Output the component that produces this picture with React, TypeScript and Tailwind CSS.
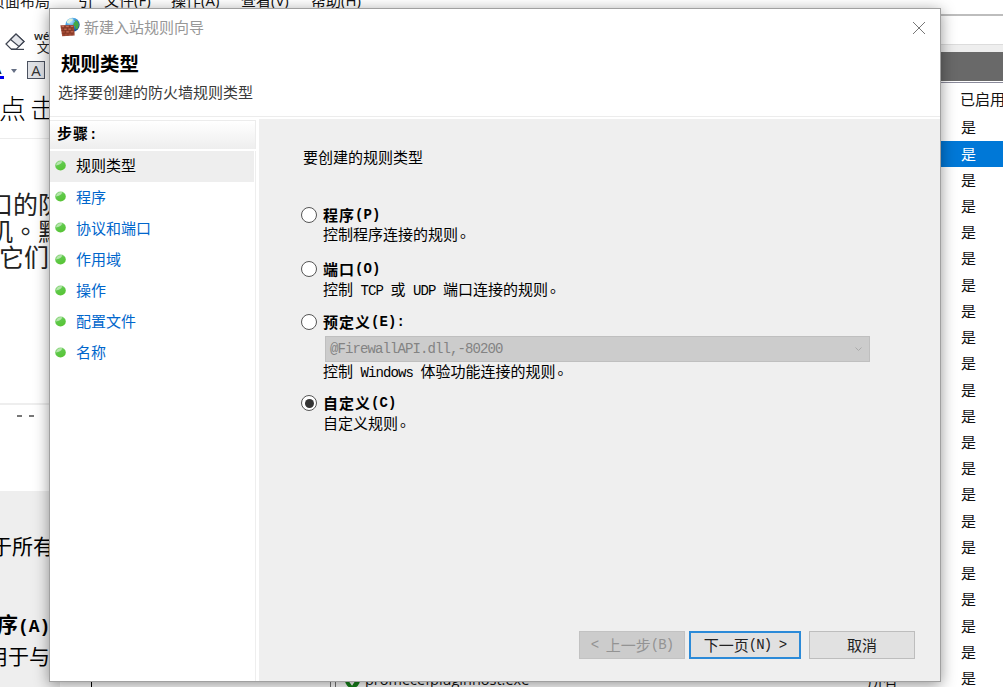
import { useState, type ReactNode } from "react";
import clsx from "clsx";

type RuleType = "program" | "port" | "predefined" | "custom";

const STEPS = ["规则类型", "程序", "协议和端口", "作用域", "操作", "配置文件", "名称"];
const RULE_ROWS = Array.from({ length: 22 }, (_, i) => i);

// Half-width characters take exactly half of a 15px CJK cell
function Half({ children, bold }: { children: ReactNode; bold?: boolean }) {
  return (
    <span className={clsx("whitespace-pre font-['Liberation_Mono'] text-[14px]", bold ? "tracking-[0.1px]" : "tracking-[-0.9px]")}>
      {children}
    </span>
  );
}

function Stop() {
  return <span className="relative -top-[3px] left-[2px]">。</span>;
}

function FirewallIcon() {
  return (
    <svg width="20" height="20" viewBox="0 0 20 20" className="-mt-[3px] shrink-0">
      <defs>
        <radialGradient id="globe" cx="35%" cy="25%" r="75%">
          <stop offset="0" stopColor="#c9ecff" />
          <stop offset="0.5" stopColor="#3d9be0" />
          <stop offset="1" stopColor="#0e4c98" />
        </radialGradient>
      </defs>
      <circle cx="12.6" cy="7.8" r="7.1" fill="url(#globe)" />
      <path d="M7 4l3-2.6 3 .4-.6 2-2.2.8-.4 2L7 6z" fill="#d9f0dc" />
      <path d="M14 2.6l3.6 1.8 1.4 3-1 4-2.3 1.2-.5-3-2-1.4.5-2.4 1.6-1z" fill="#44a845" />
      <path d="M.4 8.2l13.4-.2.9 10.4L2.2 19.2z" fill="#a24a35" />
      <path
        d="M.8 10.9l13.2-.1M1.3 13.6l12.9-.3M1.8 16.3l12.6-.4M5 8.2v2.7M9.6 8.1v2.7M3.3 10.9v2.7M7.5 10.9v2.6M11.8 10.8v2.6M5.4 13.5v2.7M9.9 13.4v2.7M4 16.2v2.7M8 16.1v2.6M12 15.9v2.6"
        stroke="#75301f"
        strokeWidth=".6"
      />
      <path d="M2 9.6h2M6.2 9.5h2.4M11 9.5h2M4.4 12.3h2M8.8 12.2h2M6.6 14.9h2M11 14.8h2" stroke="#cf7860" strokeWidth=".8" />
    </svg>
  );
}

function Bullet() {
  return (
    <svg width="11" height="11" viewBox="0 0 11 11" className="shrink-0">
      <defs>
        <linearGradient id="bullet" x1="0" y1="0" x2=".5" y2="1">
          <stop offset="0" stopColor="#a8dfa0" />
          <stop offset=".5" stopColor="#5fc94a" />
          <stop offset="1" stopColor="#58c436" />
        </linearGradient>
      </defs>
      <ellipse cx="5.5" cy="5.5" rx="5.3" ry="5" fill="url(#bullet)" />
      <path d="M1 5.5C1.6 2 4.4 1 7.2 1.2 6.5 4 3.5 5 1 5.5z" fill="#d3efcd" opacity=".7" />
    </svg>
  );
}

function RuleOption({
  label,
  accessKey,
  suffix,
  checked,
  onSelect,
  children,
}: {
  label: string;
  accessKey: string;
  suffix?: string;
  checked: boolean;
  onSelect: () => void;
  children: ReactNode;
}) {
  return (
    <div>
      <button type="button" onClick={onSelect} className="flex h-5 items-center gap-[6px] font-bold">
        <span className="flex size-4 shrink-0 items-center justify-center rounded-full border-[1.5px] border-[#555] bg-white">
          {checked && <span className="size-[9px] rounded-full bg-[#333]" />}
        </span>
        <span className="flex items-center whitespace-nowrap leading-5 tracking-[1px]">
          {label}
          <Half bold>{`(${accessKey})${suffix ?? ""}`}</Half>
        </span>
      </button>
      <div className="pl-[22px]">{children}</div>
    </div>
  );
}

function DocumentPane() {
  return (
    <div className="flex w-[60px] shrink-0 flex-col overflow-hidden whitespace-nowrap bg-white text-black">
      <div className="-mt-[9px] -ml-2.5 h-[23px] text-[15px] leading-[20px] text-[#222]">页面布局</div>
      <div className="mt-3 flex h-[32px] items-center">
        <svg width="21" height="18" viewBox="0 0 21 18" className="ml-[5px] shrink-0" fill="none" stroke="#3d4350" strokeWidth="1.2">
          <path d="M1 11L11 1l8 7.5L11.5 16H6z" fill="#fff" />
          <path d="M5.5 6.5L11 1l8 7.5-5 5z" fill="#e4e6eb" />
          <path d="M6 16.4h13" />
        </svg>
        <div className="ml-2 flex flex-col items-center text-[#222]">
          <div className="h-[11px] text-[11px] leading-[11px] font-semibold">wén</div>
          <div className="-ml-[4px] h-[13px] text-[13px] leading-[13px]">文</div>
        </div>
      </div>
      <div className="flex h-[40px] items-start pt-[3px]">
        <div className="-ml-2 h-[18px] w-[12px] border-b-[3px] border-[#0000ee] text-[15px] leading-[14px]">A</div>
        <svg width="6" height="4" viewBox="0 0 6 4" className="mt-[8px] ml-[7px]">
          <path d="M0 0h6L3 4z" fill="#667085" />
        </svg>
        <div className="ml-[10px] size-[18px] border-[1.5px] border-[#4b5260] bg-[#dfe1e5] text-center text-[15px] leading-[16px] text-[#333]">A</div>
      </div>
      <div className="-ml-[1px] h-[41px] border-b border-[#ececec] pt-px text-[27px] leading-[20px] font-light tracking-[4px]">点击</div>
      <div className="-ml-[12px] mt-[52px] h-[212px] text-[25px] leading-[26px] text-[#222]">
        <div>口的防</div>
        <div>
          机<span className="font-['Noto_Sans_CJK_TC',sans-serif]">。</span>默
        </div>
        <div className="ml-[11px]">它们</div>
      </div>
      <div className="h-[88px] border-t-2 border-[#eee] pt-[10px] pl-[17px]">
        <div className="flex gap-[7px]">
          <span className="h-[2px] w-[5px] bg-[#777]" />
          <span className="h-[2px] w-[5px] bg-[#777]" />
        </div>
      </div>
      <div className="h-[196px] shrink-0 bg-[#eee] pt-[40px] text-[21px] leading-[30px]">
        <div className="-ml-[9px]">于所有</div>
        <div className="-ml-[3px] mt-[48px] font-bold">
          序<span className="font-['Liberation_Mono'] text-[18px]">(A)</span>
        </div>
        <div className="-mt-px -ml-[13px]">用于与</div>
      </div>
    </div>
  );
}

function ConsolePane() {
  return (
    <div className="flex min-w-0 flex-1 flex-col overflow-hidden bg-white text-[15px] text-[#111]">
      <div className="-mt-[10px] flex h-[24px] shrink-0 whitespace-nowrap pl-[18px] leading-[20px]">
        <span className="w-[26px]">引</span>
        <span className="w-[67px]">文件(F)</span>
        <span className="w-[70px]">操作(A)</span>
        <span className="w-[70px]">查看(V)</span>
        <span>帮助(H)</span>
      </div>
      <div className="h-[30px] shrink-0 border-t-2 border-[#bdbdbd] bg-white" />
      <div className="h-[8px] shrink-0 border-t border-[#dcdcdc] bg-[#eee]" />
      <div className="h-[29px] shrink-0 bg-[#696969]" />
      <div className="h-[2px] shrink-0 border-b border-[#8b8b9b]" />
      <div className="flex flex-1">
        <div className="flex flex-1 flex-col justify-end">
          <div className="-mb-[2px] flex h-[26px] items-center">
            <span className="ml-[31px] h-full w-px bg-black" />
            <span className="ml-[238px] h-full w-[6px] border-x border-[#777]" />
            <svg width="15" height="15" viewBox="0 0 15 15" className="ml-[9px]">
              <circle cx="7.5" cy="7.5" r="7.5" fill="#17851b" />
              <path d="M4 7l3 4 4-6" stroke="#fff" strokeWidth="2" fill="none" />
            </svg>
            <span className="ml-[5px] w-[503px] text-[14.5px]">promecefpluginhost.exe</span>
            <span>所有</span>
          </div>
        </div>
        <div className="w-[63px] shrink-0">
          <div className="flex h-[31.5px] items-center whitespace-nowrap">
            <span className="ml-[12px] h-full w-px bg-[#e5e5e5]" />
            <span className="ml-[8px]">已启用</span>
          </div>
          {RULE_ROWS.map((row) => (
            <div key={row} className={clsx("flex h-[26.22px] items-center pl-[21px]", row === 1 && "bg-[#0078d7] text-white")}>
              是
            </div>
          ))}
        </div>
      </div>
    </div>
  );
}

function RuleWizard() {
  const [selected, setSelected] = useState<RuleType>("custom");
  const [step, setStep] = useState(0);

  return (
    <div className="absolute top-2 left-[49px] flex h-[674px] w-[892px] flex-col border border-[#a0a0a0] bg-white shadow-[0_3px_14px_rgba(0,0,0,0.42)]">
      <header className="h-[108px] shrink-0 border-b border-[#ececec]">
        <div className="flex h-[38px] items-center pr-[14px] pl-[10px]">
          <FirewallIcon />
          <span className="-mt-[2px] ml-1 flex-1 text-[15px] text-[#979797]">新建入站规则向导</span>
          <svg width="14" height="14" viewBox="0 0 14 14" stroke="#777" strokeWidth="1">
            <path d="M1 1l12 12M13 1L1 13" />
          </svg>
        </div>
        <h1 className="h-[34px] pl-[11px] text-[19.5px] leading-[34px] font-bold">规则类型</h1>
        <p className="pl-2 text-[15px] leading-[22px] text-[#3a3a3a]">选择要创建的防火墙规则类型</p>
      </header>

      <div className="flex flex-1 pt-[2px]">
        <aside className="w-[206px] shrink-0">
          <div className="mt-px h-[29px] border-t border-r border-[#ececec] bg-linear-to-b from-white to-[#eee] pl-[7px] text-[15px] leading-[25px] font-bold tracking-[1px]">
            步骤<Half bold>:</Half>
          </div>
          <ul className="mt-[2px] h-[530px] border-r border-[#eee] pr-px">
            {STEPS.map((name, i) => (
              <li
                key={name}
                onClick={() => setStep(i)}
                className={clsx(
                  "flex h-[31.2px] cursor-default items-center gap-[10px] pb-[2px] pl-[5px] text-[15px]",
                  i === step ? "bg-[#eee] text-black" : "text-[#0066cc]",
                )}
              >
                <Bullet />
                {name}
              </li>
            ))}
          </ul>
        </aside>

        <main className="ml-[3px] flex flex-1 flex-col bg-[#efefef] pr-[25px] pb-[22px] text-[15px] leading-5 text-black">
          <p className="mt-[28px] ml-[44px]">要创建的规则类型</p>
          <div className="mt-[38px] ml-[42px]">
            <RuleOption label="程序" accessKey="P" checked={selected === "program"} onSelect={() => setSelected("program")}>
              <p className="-mt-px">
                控制程序连接的规则<Stop />
              </p>
            </RuleOption>
            <div className="mt-[15px]">
              <RuleOption label="端口" accessKey="O" checked={selected === "port"} onSelect={() => setSelected("port")}>
                <p>
                  控制<Half> TCP </Half>或<Half> UDP </Half>端口连接的规则<Stop />
                </p>
              </RuleOption>
            </div>
            <div className="mt-[11px]">
              <RuleOption label="预定义" accessKey="E" suffix=":" checked={selected === "predefined"} onSelect={() => setSelected("predefined")}>
                <div className="mt-[4px] ml-[2px] flex h-[26px] w-[545px] items-center justify-between border border-[#bfbfbf] bg-[#ccc] pr-[7px] pl-1 text-[#838383]">
                  <Half>@FirewallAPI.dll,-80200</Half>
                  <svg width="7" height="4" viewBox="0 0 7 4" fill="none" stroke="#aaa">
                    <path d="M.5.5l3 3 3-3" />
                  </svg>
                </div>
                <p className="-mt-px">
                  控制<Half> Windows </Half>体验功能连接的规则<Stop />
                </p>
              </RuleOption>
            </div>
            <div className="mt-[10px]">
              <RuleOption label="自定义" accessKey="C" checked={selected === "custom"} onSelect={() => setSelected("custom")}>
                <p>
                  自定义规则<Stop />
                </p>
              </RuleOption>
            </div>
          </div>

          <footer className="mt-auto flex justify-end">
            <button disabled className="flex h-[28px] w-[106px] items-center justify-center border border-[#c2c2c2] bg-[#ccc] text-[#939393]">
              <Half>{"< "}</Half>上一步<Half>(B)</Half>
            </button>
            <button className="ml-1 flex h-[28px] w-[112px] items-center justify-center border-2 border-[#2b8ad8] bg-[#e1e1e1] text-[#222]">
              下一页<Half>{"(N) >"}</Half>
            </button>
            <button className="ml-[8px] flex h-[28px] w-[106px] items-center justify-center border border-[#bdbdbd] bg-[#e1e1e1] text-[#222]">取消</button>
          </footer>
        </main>
      </div>
    </div>
  );
}

export default function App() {
  return (
    <div className="relative flex h-[687px] w-[1003px] overflow-hidden bg-white font-['Open_Sans','Noto_Sans_CJK_SC',sans-serif]">
      <DocumentPane />
      <ConsolePane />
      <RuleWizard />
    </div>
  );
}
